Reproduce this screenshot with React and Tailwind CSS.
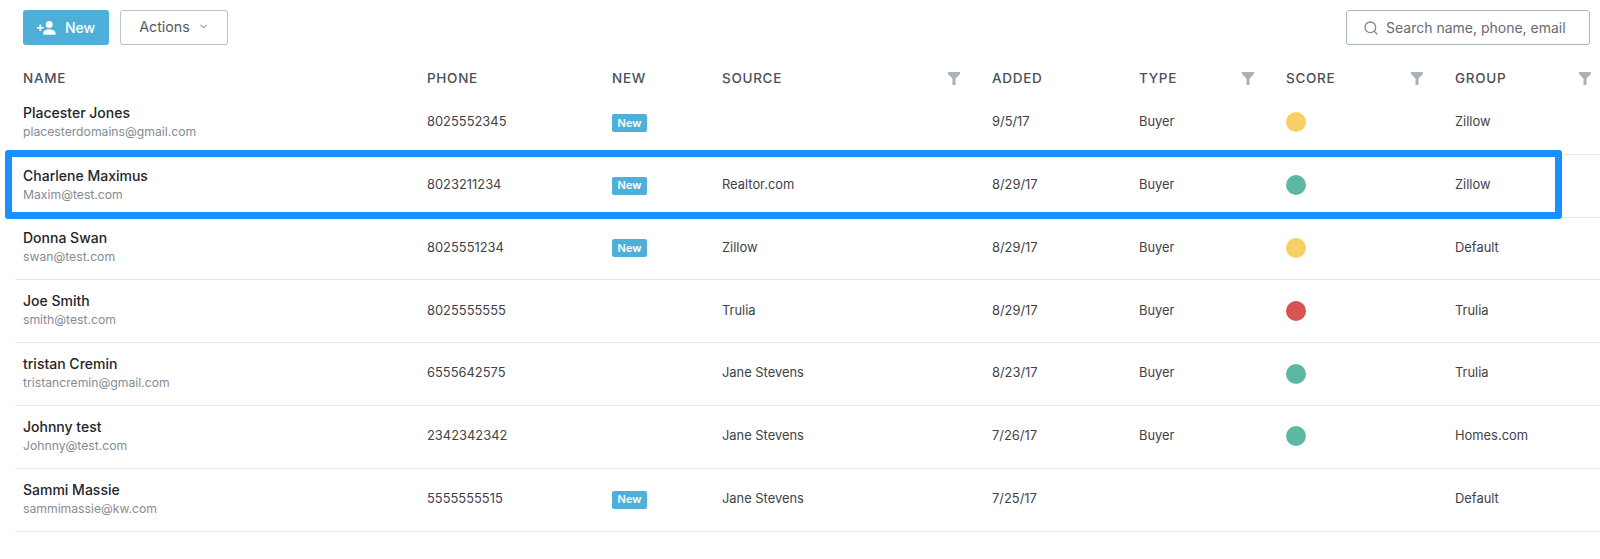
import React from "react";
import { ChevronDown, Search } from "lucide-react";

const leads = [
  { name: "Placester Jones", email: "placesterdomains@gmail.com", phone: "8025552345", isNew: true, source: "", added: "9/5/17", type: "Buyer", score: "bg-[#f8ce66]", group: "Zillow" },
  { name: "Charlene Maximus", email: "Maxim@test.com", phone: "8023211234", isNew: true, source: "Realtor.com", added: "8/29/17", type: "Buyer", score: "bg-[#5cb8a2]", group: "Zillow" },
  { name: "Donna Swan", email: "swan@test.com", phone: "8025551234", isNew: true, source: "Zillow", added: "8/29/17", type: "Buyer", score: "bg-[#f8ce66]", group: "Default" },
  { name: "Joe Smith", email: "smith@test.com", phone: "8025555555", isNew: false, source: "Trulia", added: "8/29/17", type: "Buyer", score: "bg-[#d9534f]", group: "Trulia" },
  { name: "tristan Cremin", email: "tristancremin@gmail.com", phone: "6555642575", isNew: false, source: "Jane Stevens", added: "8/23/17", type: "Buyer", score: "bg-[#5cb8a2]", group: "Trulia" },
  { name: "Johnny test", email: "Johnny@test.com", phone: "2342342342", isNew: false, source: "Jane Stevens", added: "7/26/17", type: "Buyer", score: "bg-[#5cb8a2]", group: "Homes.com" },
  { name: "Sammi Massie", email: "sammimassie@kw.com", phone: "5555555515", isNew: true, source: "Jane Stevens", added: "7/25/17", type: "", score: "", group: "Default" },
];

const gridCols = "grid grid-cols-[404px_185px_110px_270px_147px_147px_169px_1fr]";

const FilterIcon = () => (
  <svg width="12" height="13" viewBox="0 0 12 13" className="fill-[#a8b2b8]">
    <path d="M0 0h12v2L7.5 6.5V13h-3V6.5L0 2z" />
  </svg>
);

const UserPlusIcon = () => (
  <svg width="19" height="14" viewBox="0 0 19 14" className="fill-white">
    <path d="M0 6h2.5V3.5h1.6V6h2.5v1.6H4.1v2.5H2.5V7.6H0z" />
    <circle cx="12.2" cy="3.6" r="3.5" />
    <path d="M6.3 13.8v-2c0-2.2 3.6-3.5 5.9-3.5s6.3 1.3 6.3 3.5v2z" />
  </svg>
);

const Header = ({ label, filter, last }) => (
  <div className={`flex items-center justify-between text-[13.5px] font-medium tracking-[0.7px] text-[#4a4f55] ${last ? "pr-[9px]" : "pr-[32px]"}`}>
    <span>{label}</span>
    {filter && <FilterIcon />}
  </div>
);

const App = () => {
  return (
    <div className="relative h-[559px] w-full overflow-hidden bg-white font-['Inter',sans-serif]">
      <div className="flex items-start justify-between pl-[23px] pr-[10px] pt-[10px]">
        <div className="flex gap-[11px]">
          <button className="flex h-[35px] w-[86px] items-center justify-center gap-[9px] rounded-[3px] bg-[#4eb0d9] text-[14px] font-medium text-white">
            <UserPlusIcon />
            New
          </button>
          <button className="flex h-[35px] w-[108px] items-center justify-center gap-[8px] rounded-[3px] border border-[#b4c3cc] pb-[2px] text-[14.3px] text-[#55595e]">
            Actions
            <ChevronDown size={11} strokeWidth={2} />
          </button>
        </div>
        <div className="flex h-[35px] w-[244px] items-center gap-[7px] rounded-[3px] border border-[#a9b8c1] pl-[16px] text-[14px] text-[#666b70]">
          <Search size={16} strokeWidth={2} className="text-[#7e8a91]" />
          Search name, phone, email
        </div>
      </div>

      <div className="ml-[15px]">
        <div className={`${gridCols} h-[47px] items-center pl-[8px] pt-[20px]`}>
          <Header label="NAME" />
          <Header label="PHONE" />
          <Header label="NEW" />
          <Header label="SOURCE" filter />
          <Header label="ADDED" />
          <Header label="TYPE" filter />
          <Header label="SCORE" filter />
          <Header label="GROUP" filter last />
        </div>

        {leads.map((lead) => (
          <div key={lead.email} className={`${gridCols} h-[62.8px] items-center border-b border-[#e6e8ea] pb-[2px] pl-[8px] text-[12.9px] text-[#3f4347]`}>
            <div>
              <div className="text-[14px] font-medium leading-[18px] text-[#22262a]">{lead.name}</div>
              <div className="mt-[1px] text-[12.2px] leading-[17px] text-[#858b91]">{lead.email}</div>
            </div>
            <div>{lead.phone}</div>
            <div>
              {lead.isNew && (
                <span className="mt-[2px] flex h-[18px] w-[35px] items-center justify-center rounded-[2px] bg-[#4eb0d9] text-[11px] font-semibold text-white">
                  New
                </span>
              )}
            </div>
            <div>{lead.source}</div>
            <div>{lead.added}</div>
            <div>{lead.type}</div>
            <div>
              {lead.score && <div className={`mt-[1px] h-[20px] w-[20px] rounded-full ${lead.score}`} />}
            </div>
            <div>{lead.group}</div>
          </div>
        ))}
      </div>

      <div className="absolute left-[5px] top-[150px] h-[69px] w-[1557px] rounded-[3px] border-[7px] border-[#1a90ff]" />
    </div>
  );
};

export default App;
